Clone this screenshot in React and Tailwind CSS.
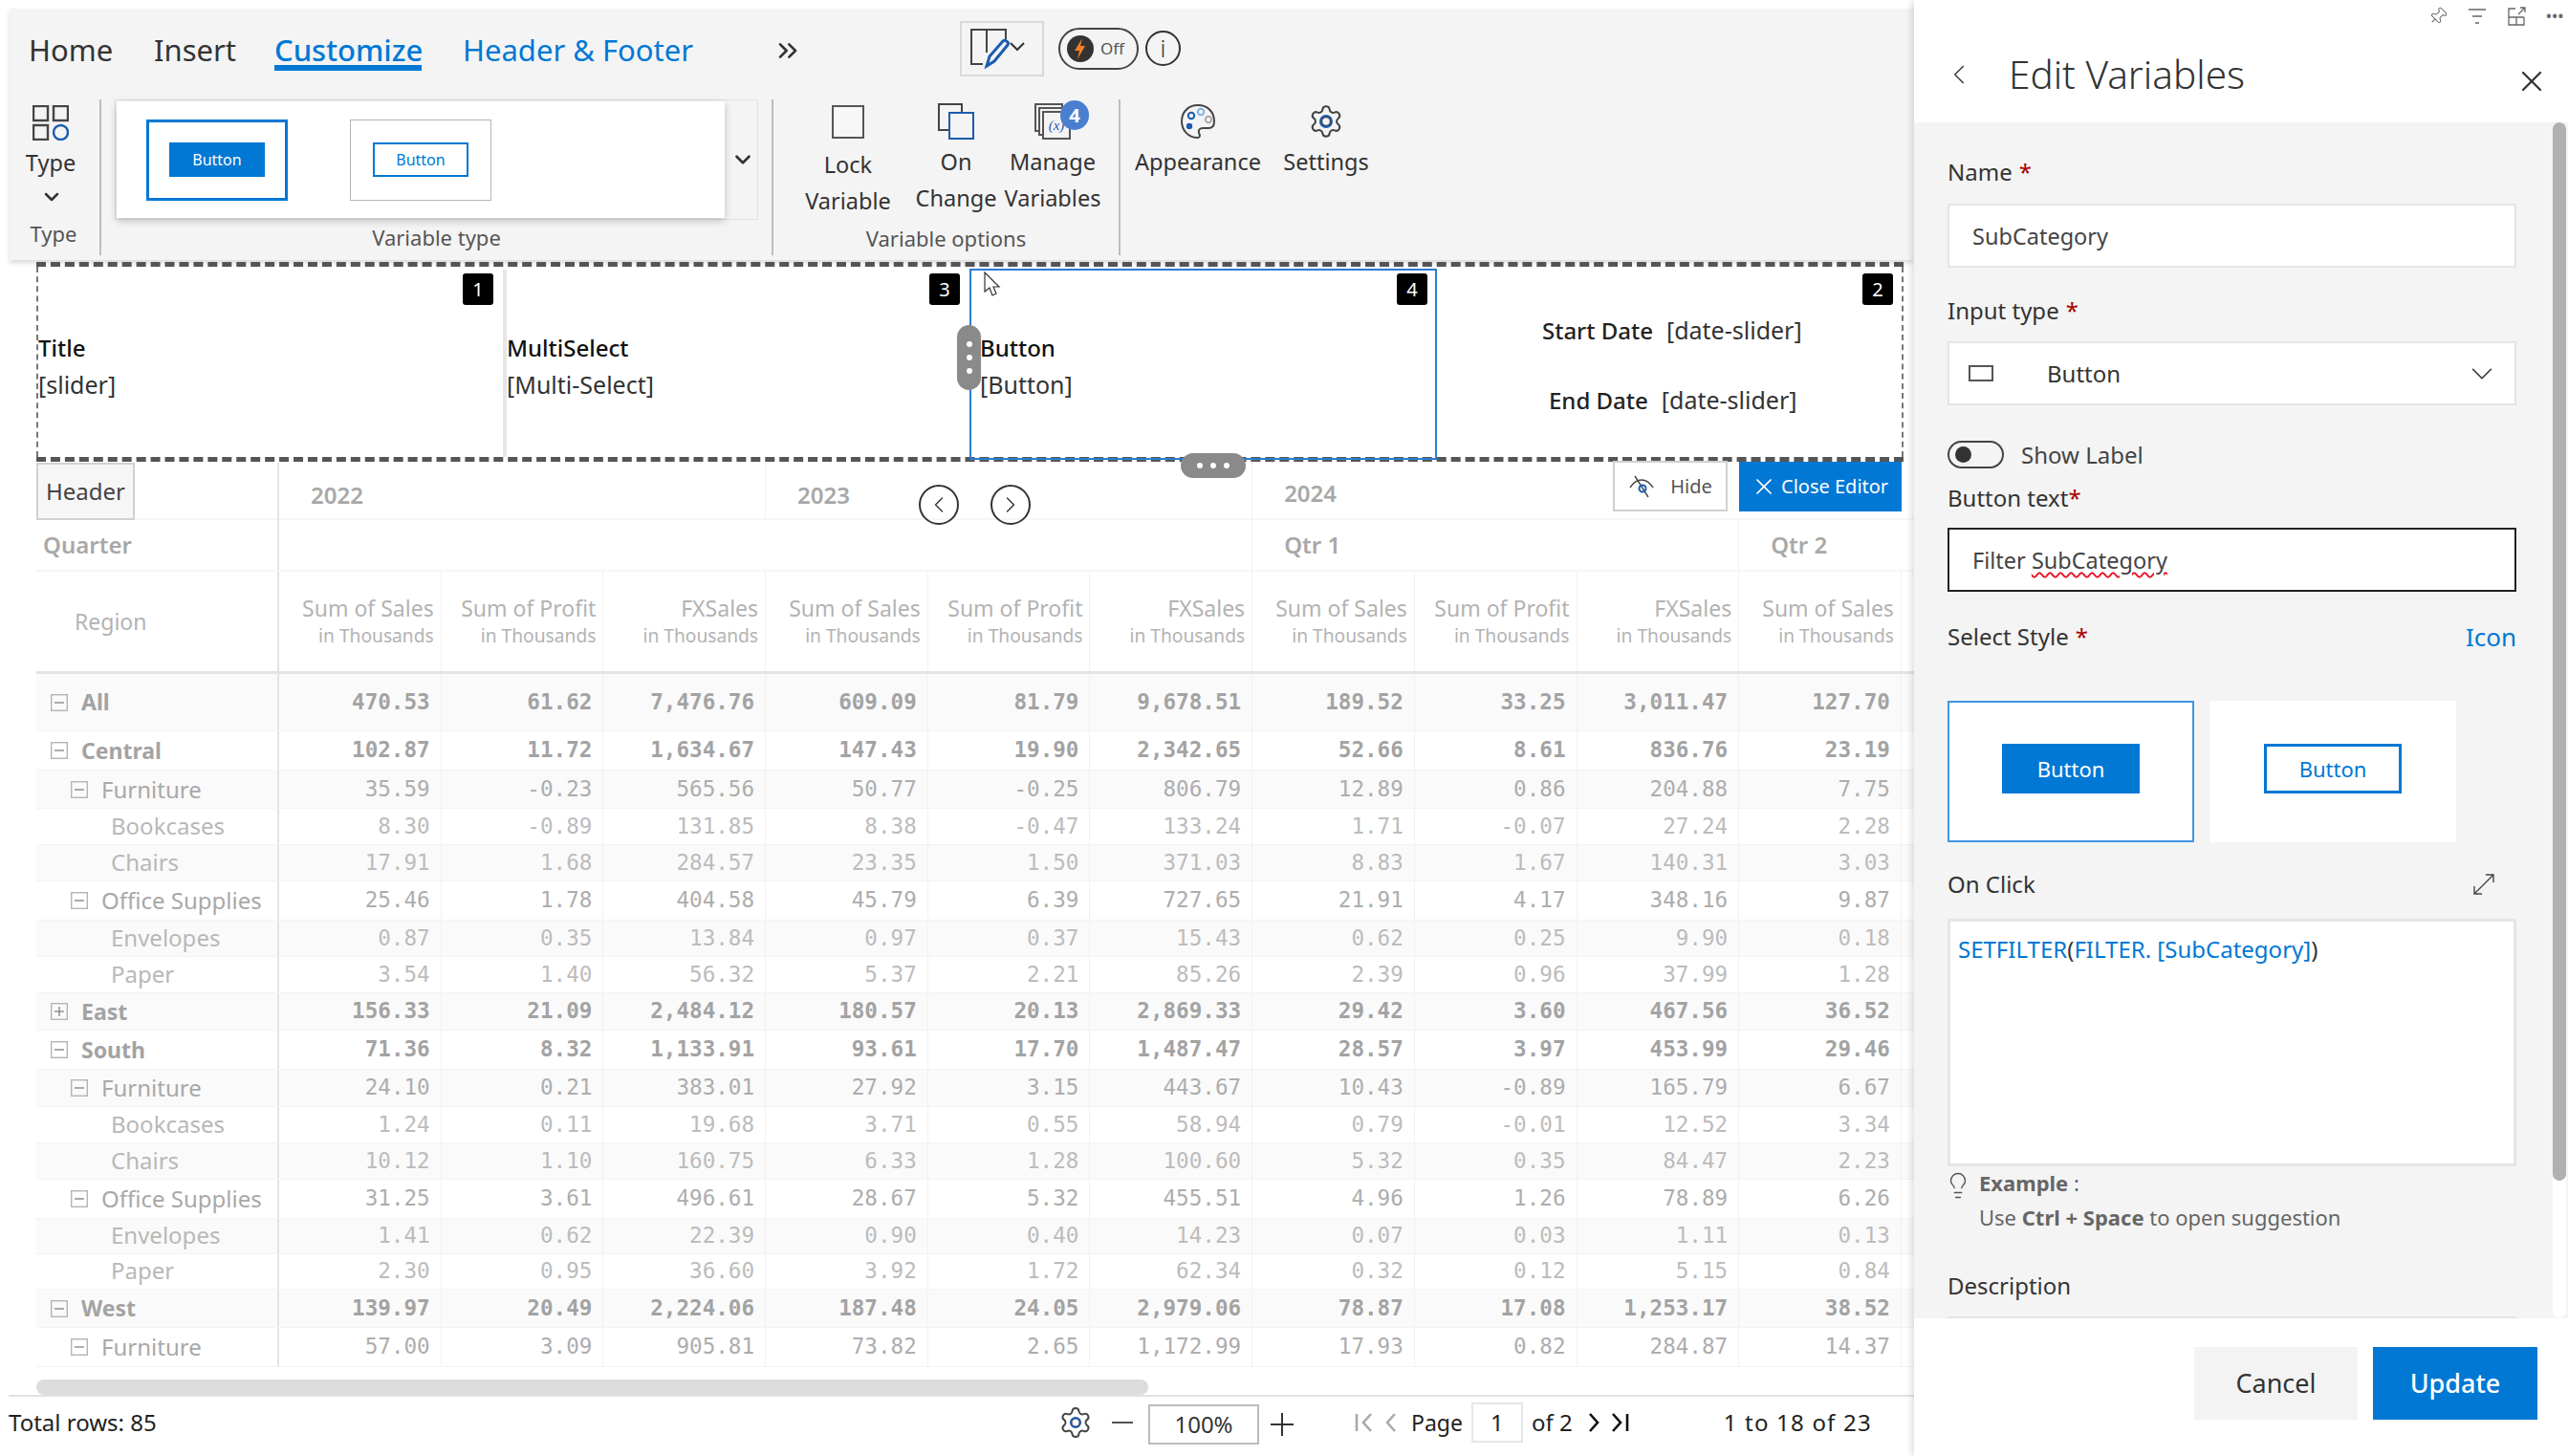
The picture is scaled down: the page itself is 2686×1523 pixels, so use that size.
import { ChevronDown, ChevronLeft, ChevronRight, ChevronsRight, Settings, X, Pin, Lightbulb } from 'lucide-react';

const rows = [
  ['All', 0, 'minus', 60, ['470.53', '61.62', '7,476.76', '609.09', '81.79', '9,678.51', '189.52', '33.25', '3,011.47', '127.70']],
  ['Central', 0, 'minus', 41, ['102.87', '11.72', '1,634.67', '147.43', '19.90', '2,342.65', '52.66', '8.61', '836.76', '23.19']],
  ['Furniture', 1, 'minus', 40, ['35.59', '-0.23', '565.56', '50.77', '-0.25', '806.79', '12.89', '0.86', '204.88', '7.75']],
  ['Bookcases', 2, null, 38, ['8.30', '-0.89', '131.85', '8.38', '-0.47', '133.24', '1.71', '-0.07', '27.24', '2.28']],
  ['Chairs', 2, null, 38, ['17.91', '1.68', '284.57', '23.35', '1.50', '371.03', '8.83', '1.67', '140.31', '3.03']],
  ['Office Supplies', 1, 'minus', 41, ['25.46', '1.78', '404.58', '45.79', '6.39', '727.65', '21.91', '4.17', '348.16', '9.87']],
  ['Envelopes', 2, null, 38, ['0.87', '0.35', '13.84', '0.97', '0.37', '15.43', '0.62', '0.25', '9.90', '0.18']],
  ['Paper', 2, null, 38, ['3.54', '1.40', '56.32', '5.37', '2.21', '85.26', '2.39', '0.96', '37.99', '1.28']],
  ['East', 0, 'plus', 39, ['156.33', '21.09', '2,484.12', '180.57', '20.13', '2,869.33', '29.42', '3.60', '467.56', '36.52']],
  ['South', 0, 'minus', 41, ['71.36', '8.32', '1,133.91', '93.61', '17.70', '1,487.47', '28.57', '3.97', '453.99', '29.46']],
  ['Furniture', 1, 'minus', 39, ['24.10', '0.21', '383.01', '27.92', '3.15', '443.67', '10.43', '-0.89', '165.79', '6.67']],
  ['Bookcases', 2, null, 38, ['1.24', '0.11', '19.68', '3.71', '0.55', '58.94', '0.79', '-0.01', '12.52', '3.34']],
  ['Chairs', 2, null, 38, ['10.12', '1.10', '160.75', '6.33', '1.28', '100.60', '5.32', '0.35', '84.47', '2.23']],
  ['Office Supplies', 1, 'minus', 41, ['31.25', '3.61', '496.61', '28.67', '5.32', '455.51', '4.96', '1.26', '78.89', '6.26']],
  ['Envelopes', 2, null, 37, ['1.41', '0.62', '22.39', '0.90', '0.40', '14.23', '0.07', '0.03', '1.11', '0.13']],
  ['Paper', 2, null, 37, ['2.30', '0.95', '36.60', '3.92', '1.72', '62.34', '0.32', '0.12', '5.15', '0.84']],
  ['West', 0, 'minus', 40, ['139.97', '20.49', '2,224.06', '187.48', '24.05', '2,979.06', '78.87', '17.08', '1,253.17', '38.52']],
  ['Furniture', 1, 'minus', 41, ['57.00', '3.09', '905.81', '73.82', '2.65', '1,172.99', '17.93', '0.82', '284.87', '14.37']],
];

const measures = ['Sum of Sales', 'Sum of Profit', 'FXSales', 'Sum of Sales', 'Sum of Profit', 'FXSales', 'Sum of Sales', 'Sum of Profit', 'FXSales', 'Sum of Sales'];

const gridCols = 'grid grid-cols-[254px_repeat(10,169.7px)]';

function TreeBox({ kind }) {
  return (
    <svg width="18" height="18" viewBox="0 0 18 18" className="shrink-0 text-[#b5b5b5]" fill="none" stroke="currentColor" strokeWidth="1.4">
      <rect x="0.7" y="0.7" width="16.6" height="16.6" />
      <path d="M4 9h10" stroke="#888" />
      {kind === 'plus' && <path d="M9 4v10" stroke="#888" />}
    </svg>
  );
}

function TableRow({ row, index }) {
  const [label, level, box, height, values] = row;
  const bold = level === 0;
  const indent = level === 0 ? 'pl-[15px]' : level === 1 ? 'pl-[36px]' : 'pl-[78px] pb-[2px]';
  const tone = index % 2 === 0 ? 'bg-[#fafafa]' : 'bg-white';
  return (
    <div className={`${gridCols} ${tone} border-b border-[#f3f3f3]`} style={{ height }}>
      <div className={`${indent} flex items-center gap-[14px] border-r-2 border-[#e4e4e4] ${bold ? 'text-[23px] font-bold text-[#a3a3a3]' : level === 1 ? 'text-[24px] text-[#a8a8a8]' : 'text-[24px] text-[#b8b8b8]'}`}>
        {box && <TreeBox kind={box} />}
        <span className="leading-none">{label}</span>
      </div>
      {values.map((v, i) => (
        <div key={i} className={`flex items-center justify-end pr-[11px] border-r border-[#f1f1f1] font-['DejaVu_Sans_Mono',monospace] text-[22.6px] ${bold ? 'font-bold text-[#a3a3a3]' : level === 1 ? 'text-[#adadad]' : 'text-[#bcbcbc]'}`}>
          {v}
        </div>
      ))}
    </div>
  );
}

function RibbonItem({ icon, lines, width, topPad = 'pt-[5px]' }) {
  return (
    <div className={`flex flex-col items-center ${topPad}`} style={{ width }}>
      <div className="h-[46px] flex items-center justify-center">{icon}</div>
      <div className="text-[23.5px] leading-[38px] text-[#333] text-center whitespace-nowrap">
        {lines.map((l) => <div key={l}>{l}</div>)}
      </div>
    </div>
  );
}

function Thumb({ active }) {
  return (
    <div className={`w-[148px] h-[85px] flex items-center justify-center bg-white ${active ? 'border-[3px] border-[#0078d4]' : 'border border-[#b5b5b5]'}`}>
      <div className={`w-[100px] h-[36px] flex items-center justify-center text-[16px] ${active ? 'bg-[#0078d4] text-white' : 'border-2 border-[#0078d4] text-[#0078d4]'}`}>Button</div>
    </div>
  );
}

function Ribbon() {
  return (
    <div className="relative ml-[10px] mt-[9px] h-[263px] bg-[#f4f4f4] shadow-[0_3px_5px_rgba(0,0,0,0.15)]">
      <div className="flex items-center h-[95px] pb-[8px] text-[31px] pl-[20px]">
        <span className="text-[#333] w-[131px] leading-none">Home</span>
        <span className="text-[#333] w-[126px] leading-none">Insert</span>
        <span className="relative text-[#0078d4] font-medium w-[197px] leading-none">
          Customize
          <span className="absolute left-0 top-[31px] w-[154px] h-[6px] bg-[#0078d4]" />
        </span>
        <span className="text-[#0078d4] w-[324px] leading-none">Header &amp; Footer</span>
        <ChevronsRight size={32} strokeWidth={2} className="text-[#333]" />
        <div className="ml-[164px] mb-[4px] w-[88px] h-[58px] border-2 border-[#d9d9d9] flex items-center justify-center">
          <svg width="68" height="44" viewBox="0 0 68 44" fill="none">
            <path d="M14 38H2V2h36v10M18 2v24" stroke="#444" strokeWidth="2" />
            <path d="M18 40l3-10 14-16c2-2 7 1 5 4L26 35z" stroke="#1c5cb0" strokeWidth="3" />
            <path d="M43 16l7 7 7-7" stroke="#333" strokeWidth="2" />
          </svg>
        </div>
        <div className="ml-[15px] mb-[4px] w-[84px] h-[44px] rounded-full border-2 border-[#444] flex items-center pl-[7px] gap-[7px]">
          <svg width="28" height="28" viewBox="0 0 28 28">
            <circle cx="14" cy="14" r="14" fill="#333" />
            <path d="M16 3l-8 13h5l-2 9 8-14h-5z" fill="#f58025" />
          </svg>
          <span className="text-[17px] text-[#555] leading-none">Off</span>
        </div>
        <div className="ml-[7px] mb-[4px] w-[37px] h-[37px] rounded-full border-2 border-[#333] flex items-center justify-center text-[25px] text-[#333] leading-none font-light">i</div>
      </div>

      <div className="flex h-[168px]">
        <div className="w-[94px] shrink-0 flex flex-col items-center pr-[8px]">
          <svg width="38" height="37" viewBox="0 0 38 37" className="mt-[6px]" fill="none" strokeWidth="2.4">
            <rect x="1" y="1" width="15" height="15" stroke="#444" />
            <rect x="22" y="1" width="15" height="15" stroke="#444" />
            <rect x="1" y="21" width="15" height="15" stroke="#444" />
            <circle cx="29.5" cy="28.5" r="7.5" stroke="#1c5cb0" />
          </svg>
          <span className="text-[23.5px] leading-[30px] text-[#333] mt-[8px]">Type</span>
          <ChevronDown size={24} strokeWidth={2.5} className="text-[#333] mt-[9px] ml-[2px]" />
          <span className="text-[22px] leading-[28px] text-[#555] mt-[12px] ml-[6px]">Type</span>
        </div>
        <div className="w-[2px] h-[163px] bg-[#bdbdbd] shrink-0" />
        <div className="w-[701px] shrink-0 flex flex-col pl-[14px]">
          <div className="flex items-center w-[673px] h-[126px] border border-[#e2e2e2]">
            <div className="w-[636px] h-[122px] ml-[1px] bg-white shadow-[0_3px_8px_rgba(0,0,0,0.22)] flex items-center gap-[65px] pl-[31px]">
              <Thumb active />
              <Thumb />
            </div>
            <ChevronDown size={26} strokeWidth={2.5} className="text-[#333] ml-[6px]" />
          </div>
          <div className="w-[673px] text-center text-[22px] leading-[28px] text-[#555] mt-[4px]">Variable type</div>
        </div>
        <div className="w-[2px] h-[163px] bg-[#bdbdbd] shrink-0" />
        <div className="w-[361px] shrink-0 flex flex-col relative">
          <div className="flex h-[133px] pl-[26px]">
            <RibbonItem
              width={104}
              icon={<div className="w-[34px] h-[35px] mb-[6px] border-2 border-[#555] bg-[#f7f7f7]" />}
              lines={['Lock', 'Variable']}
              topPad="pt-[3px]"
            />
            <RibbonItem
              width={122}
              icon={
                <div className="relative w-[38px] h-[38px]">
                  <div className="absolute left-0 top-0 w-[26px] h-[29px] border-2 border-[#444]" />
                  <div className="absolute left-[11px] top-[9px] w-[27px] h-[29px] border-2 border-[#1c5cb0] bg-[#f4f4f4]" />
                </div>
              }
              lines={['On', 'Change']}
              topPad="pt-[0px]"
            />
            <RibbonItem
              width={80}
              icon={
                <div className="relative w-[38px] h-[38px]">
                  <div className="absolute left-0 top-0 w-[30px] h-[30px] border-2 border-[#555]" />
                  <div className="absolute left-[4px] top-[4px] w-[30px] h-[30px] border-2 border-[#555] bg-[#f4f4f4]" />
                  <div className="absolute left-[8px] top-[8px] w-[30px] h-[30px] border-2 border-[#555] bg-[#f4f4f4] flex items-center justify-center text-[15px] italic text-[#1c5cb0] font-['Liberation_Serif',serif] leading-none">(x)</div>
                  <div className="absolute left-[27px] top-[-3px] w-[30px] h-[31px] rounded-full bg-[#4a7fd0] flex items-center justify-center text-white text-[20px] font-bold leading-none">4</div>
                </div>
              }
              lines={['Manage', 'Variables']}
              topPad="pt-[0px]"
            />
          </div>
          <div className="text-center text-[22px] leading-[28px] text-[#555] mt-[-2px]">Variable options</div>
        </div>
        <div className="w-[2px] h-[163px] bg-[#bdbdbd] shrink-0" />
        <div className="flex">
          <RibbonItem
            width={162}
            topPad="pt-[0px]"
            icon={
              <svg width="38" height="38" viewBox="0 0 38 38" fill="none">
                <path d="M19 2C9 2 2 9 2 19c0 9 7 17 16 17 4 0 3-3 2-5-1-3 1-5 4-5h6c4 0 6-3 6-7C36 9 29 2 19 2z" stroke="#444" strokeWidth="2" />
                <circle cx="12" cy="13" r="3.2" stroke="#1c5cb0" strokeWidth="2" />
                <circle cx="22" cy="9" r="3.2" stroke="#7fb2e5" strokeWidth="2" />
                <circle cx="30" cy="17" r="3.2" stroke="#aaa" strokeWidth="2" />
                <circle cx="10" cy="24" r="3.2" fill="#1c5cb0" />
              </svg>
            }
            lines={['Appearance']}
          />
          <RibbonItem
            width={106}
            topPad="pt-[0px]"
            icon={
              <div className="relative">
                <Settings size={38} strokeWidth={1.3} className="text-[#444]" />
                <span className="absolute left-[12px] top-[12px] w-[14px] h-[14px] rounded-full border-2 border-[#1c5cb0]" />
              </div>
            }
            lines={['Settings']}
          />
        </div>
      </div>
    </div>
  );
}

function FilterCell({ width, badge, selected, children, divider }) {
  return (
    <div className={`relative h-full shrink-0 flex ${divider ? 'border-r-4 border-[#e6e6e6]' : ''}`} style={{ width }}>
      {selected && <div className="absolute left-0 top-[-1px] right-0 bottom-[-3px] border-2 border-[#2b7cd3]" />}
      {children}
      <div className="absolute right-[10px] top-[4px] w-[32px] h-[33px] rounded-[3px] bg-black text-white text-[20px] flex items-center justify-center leading-none">{badge}</div>
    </div>
  );
}

function Stacked({ title, tag, pad }) {
  return (
    <div className={`${pad} pt-[63px] text-[24px] leading-[38px] text-[#222]`}>
      <div className="font-medium text-[#111]">{title}</div>
      <div className="text-[25px] text-[#333]">{tag}</div>
    </div>
  );
}

function FilterBar() {
  return (
    <div className="relative ml-[38px] mt-[2px] w-[1953px] h-[209px] border-y-[5px] border-dashed border-[#555]">
      <div className="absolute left-0 top-0 bottom-0 border-l-2 border-dashed border-[#777]" />
      <div className="absolute right-0 top-0 bottom-0 border-l-2 border-dashed border-[#777]" />
      <div className="flex h-full pt-[3px]">
        <FilterCell width={492} badge="1" divider>
          <Stacked title="Title" tag="[slider]" pad="pl-[2px]" />
        </FilterCell>
        <FilterCell width={484} badge="3">
          <Stacked title="MultiSelect" tag="[Multi-Select]" pad="pl-0" />
        </FilterCell>
        <FilterCell width={489} badge="4" selected>
          <Stacked title="Button" tag="[Button]" pad="pl-[11px]" />
        </FilterCell>
        <FilterCell width={487} badge="2">
          <div className="w-full pt-[44px] text-[24px] text-[#333] leading-[38px]">
            <div className="pl-[110px]"><span className="font-medium text-[#222]">Start Date</span><span className="ml-[14px] text-[25px]">[date-slider]</span></div>
            <div className="pl-[117px] mt-[34px]"><span className="font-medium text-[#222]">End Date</span><span className="ml-[14px] text-[25px]">[date-slider]</span></div>
          </div>
        </FilterCell>
      </div>
    </div>
  );
}

function PivotTable() {
  return (
    <div className="ml-[38px] mt-[1px] w-[1964px] overflow-hidden">
      <div className={`${gridCols} h-[60px] border-b-2 border-[#f6f6f6]`}>
        <div className="border-r-2 border-[#e4e4e4]">
          <div className="w-[103px] h-[60px] border-2 border-[#d0d0d0] bg-[#f6f6f6] text-[#444] text-[24px] flex items-center justify-center">Header</div>
        </div>
        <div className="col-span-3 border-r border-[#f1f1f1] pl-[33px] pt-[16px] text-[24px] font-semibold text-[#a8a8a8]">2022</div>
        <div className="col-span-3 border-r border-[#f1f1f1] pl-[33px] pt-[16px] text-[24px] font-semibold text-[#a8a8a8]">2023</div>
        <div className="col-span-4 pl-[33px] pt-[14px] text-[24px] font-semibold text-[#a8a8a8]">2024</div>
      </div>
      <div className={`${gridCols} h-[54px] border-b-2 border-[#f6f6f6]`}>
        <div className="border-r-2 border-[#e4e4e4] pl-[7px] flex items-center text-[24px] font-semibold text-[#a8a8a8]">Quarter</div>
        <div className="col-span-6 border-r border-[#f1f1f1]" />
        <div className="col-span-3 border-r border-[#f1f1f1] pl-[33px] flex items-center text-[24px] font-semibold text-[#a8a8a8]">Qtr 1</div>
        <div className="pl-[33px] flex items-center text-[24px] font-semibold text-[#a8a8a8]">Qtr 2</div>
      </div>
      <div className={`${gridCols} h-[107px] border-b-[3px] border-[#e4e4e4]`}>
        <div className="border-r-2 border-[#e4e4e4] pl-[40px] flex items-center text-[23px] text-[#b3b3b3]">Region</div>
        {measures.map((m, i) => (
          <div key={i} className="border-r border-[#f1f1f1] flex flex-col items-end justify-center pr-[7px] text-[#b3b3b3]">
            <span className="text-[23px] leading-[30px] whitespace-nowrap">{m}</span>
            <span className="text-[19.2px] leading-[28px] whitespace-nowrap">in Thousands</span>
          </div>
        ))}
      </div>
      {rows.map((r, i) => <TableRow key={i} row={r} index={i} />)}
    </div>
  );
}

function PagerIcon({ d, dark }) {
  return (
    <svg width="26" height="26" viewBox="0 0 26 26" fill="none" stroke={dark ? '#111' : '#aaa'} strokeWidth="2.6">
      <path d={d} />
    </svg>
  );
}

function Footer() {
  return (
    <div className="ml-[9px] flex items-center h-[56px] border-t-2 border-[#e2e2e2] text-[24px] text-[#222]">
      <span className="w-[1098px]">Total rows: 85</span>
      <div className="relative">
        <Settings size={36} strokeWidth={1.3} className="text-[#444]" />
        <span className="absolute left-[12px] top-[12px] w-[12px] h-[12px] rounded-full border-2 border-[#1c5cb0]" />
      </div>
      <span className="ml-[20px] w-[22px] h-[2px] bg-[#555]" />
      <div className="ml-[16px] mt-[4px] w-[116px] h-[42px] border-2 border-[#bbb] flex items-center justify-center text-[#333] text-[24px]">100%</div>
      <span className="relative ml-[12px] w-[24px] h-[24px] mt-[4px]">
        <span className="absolute left-0 top-[11px] w-[24px] h-[2px] bg-[#333]" />
        <span className="absolute left-[11px] top-0 w-[2px] h-[24px] bg-[#333]" />
      </span>
      <div className="ml-[62px] flex items-center">
        <PagerIcon d="M4 4v18M19 4l-8 9 8 9" />
        <PagerIcon d="M18 4l-8 9 8 9" />
      </div>
      <span className="ml-[9px] text-[23px]">Page</span>
      <div className="ml-[9px] w-[54px] h-[42px] border-2 border-[#e6e6e6] flex items-center justify-center">1</div>
      <span className="ml-[9px]">of 2</span>
      <div className="ml-[10px] flex items-center">
        <PagerIcon d="M8 4l8 9-8 9" dark />
        <PagerIcon d="M6 4l8 9-8 9M21 4v18" dark />
      </div>
      <span className="ml-[96px] tracking-[1.2px]">1 to 18 of 23</span>
    </div>
  );
}

function Label({ children, required, className = '' }) {
  return (
    <div className={`text-[24px] leading-[32px] text-[#333] ${className}`}>
      {children}
      {required && <span className="text-[#a80000] ml-[7px]">*</span>}
    </div>
  );
}

function StyleCard({ active }) {
  return (
    <div className={`w-[258px] h-[148px] bg-white flex items-center justify-center pb-[6px] ${active ? 'border-2 border-[#3f96e3]' : ''}`}>
      <div className={`w-[144px] h-[52px] flex items-center justify-center text-[22px] ${active ? 'bg-[#0078d4] text-white' : 'border-[3px] border-[#0078d4] text-[#0078d4]'}`}>Button</div>
    </div>
  );
}

function SidePanel() {
  return (
    <div className="relative w-[684px] h-[1523px] flex flex-col bg-white shrink-0 shadow-[-3px_0_6px_rgba(0,0,0,0.12)]">
      <div className="h-[128px] shrink-0 relative">
        <div className="absolute top-[6px] right-0 w-[146px] flex items-center justify-between pr-[4px] text-[#666]">
          <Pin size={20} strokeWidth={1.2} className="rotate-45" />
          <svg width="20" height="20" viewBox="0 0 20 20" stroke="currentColor" strokeWidth="1.3"><path d="M1 3h18M5 10h10M8 17h4" /></svg>
          <svg width="20" height="22" viewBox="0 0 20 22" fill="none" stroke="currentColor" strokeWidth="1.3"><path d="M9 3H2v17h16V12M10 12h8M10 12v8M2 12h8M12 9l7-7M14 2h5v5" /></svg>
          <span className="text-[14px] font-bold leading-none tracking-[1px]">•••</span>
        </div>
        <div className="flex items-center pl-[30px] pt-[53px]">
          <ChevronLeft size={34} strokeWidth={1.2} className="text-[#444]" />
          <span className="ml-[35px] text-[40.5px] leading-[50px] font-light text-[#333]">Edit Variables</span>
        </div>
        <X size={36} strokeWidth={1.5} className="absolute left-[628px] top-[67px] text-[#333]" />
      </div>

      <div className="h-[1251px] shrink-0 bg-[#f4f4f4] relative overflow-hidden pl-[35px]">
        <div className="absolute right-[2px] top-0 w-[14px] h-[1250px] bg-white rounded-full">
          <div className="w-[14px] h-[1107px] bg-[#b0b0b0] rounded-b-full rounded-t-full" />
        </div>
        <div className="w-[595px]">
          <Label required className="mt-[36px]">Name</Label>
          <div className="mt-[17px] h-[67px] border-2 border-[#e5e5e5] bg-white flex items-center pl-[24px] pt-[2px] text-[23.5px] text-[#444]">SubCategory</div>
          <Label required className="mt-[29px]">Input type</Label>
          <div className="mt-[16px] h-[67px] border-2 border-[#e5e5e5] bg-white flex items-center text-[24px] text-[#333]">
            <div className="ml-[20px] w-[26px] h-[17px] border-2 border-[#555]" />
            <span className="ml-[56px]">Button</span>
            <ChevronDown size={38} strokeWidth={1} className="ml-auto mr-[15px] text-[#333]" />
          </div>
          <div className="mt-[37px] flex items-center h-[29px]">
            <div className="w-[59px] h-[29px] rounded-full border-2 border-[#444] flex items-center pl-[6px]">
              <div className="w-[17px] h-[17px] rounded-full bg-[#333]" />
            </div>
            <span className="ml-[18px] text-[24px] text-[#444]">Show Label</span>
          </div>
          <div className="mt-[15px] text-[24px] leading-[32px] text-[#333]">Button text<span className="text-[#a80000]">*</span></div>
          <div className="mt-[15px] h-[67px] border-2 border-[#222] bg-white flex items-center pl-[24px] pt-[2px] text-[23.5px] text-[#444]">
            Filter&nbsp;<span className="underline decoration-wavy decoration-[#e81123] decoration-[1.5px] underline-offset-[3px]">SubCategory</span>
          </div>
          <div className="mt-[31px] flex items-center justify-between">
            <Label required>Select Style</Label>
            <span className="text-[26px] leading-[32px] text-[#0078d4]">Icon</span>
          </div>
          <div className="mt-[51px] flex gap-[16px]">
            <StyleCard active />
            <StyleCard />
          </div>
          <div className="mt-[28px] flex items-center justify-between pr-[22px]">
            <Label>On Click</Label>
            <svg width="24" height="24" viewBox="0 0 24 24" fill="none" stroke="#444" strokeWidth="1.4"><path d="M2 22L22 2M14 2h8v8M2 14v8h8" /></svg>
          </div>
          <div className="mt-[20px] h-[259px] border-[3px] border-[#e5e5e5] bg-white pl-[8px] pt-[13px] text-[24px] leading-[32px] text-[#333]">
            <span className="text-[#0078d4]">SETFILTER</span>(<span className="text-[#0078d4]">FILTER.&nbsp;[SubCategory]</span>)
          </div>
          <div className="mt-[-1px] flex text-[#666]">
            <Lightbulb size={30} strokeWidth={1.1} className="shrink-0 text-[#555] mt-[6px] -ml-[4px]" />
            <div className="ml-[7px] text-[22px] leading-[36px]">
              <div className="font-bold">Example <span className="font-normal">:</span></div>
              <div>Use <b>Ctrl + Space</b> to open suggestion</div>
            </div>
          </div>
          <Label className="mt-[38px]">Description</Label>
          <div className="mt-[16px] h-[60px] border-2 border-[#e5e5e5] bg-white" />
        </div>
      </div>

      <div className="flex justify-end gap-[16px] pr-[32px] pt-[30px]">
        <div className="w-[171px] h-[76px] bg-[#f3f3f3] flex items-center justify-center text-[27px] text-[#333]">Cancel</div>
        <div className="w-[172px] h-[76px] bg-[#0078d4] flex items-center justify-center text-[27px] font-medium text-white">Update</div>
      </div>
    </div>
  );
}

export default function App() {
  return (
    <div className="relative flex w-[2686px] h-[1523px] overflow-hidden bg-white font-['Noto_Sans',sans-serif]">
      <div className="relative w-[2002px] shrink-0 flex flex-col">
        <Ribbon />
        <FilterBar />
        <PivotTable />
        <div className="ml-[38px] mt-[13px] w-[1163px] h-[16px] rounded-full bg-[#dcdcdc]" />
        <Footer />

        {/* floating handles and buttons over the filter bar and table */}
        <div className="absolute left-[1001px] top-[340px] w-[25px] h-[68px] rounded-full bg-[#8a8a8a] flex flex-col items-center justify-center gap-[8px]">
          <span className="w-[6px] h-[6px] rounded-full bg-white" />
          <span className="w-[6px] h-[6px] rounded-full bg-white" />
          <span className="w-[6px] h-[6px] rounded-full bg-white" />
        </div>
        <div className="absolute left-[1235px] top-[474px] w-[68px] h-[26px] rounded-full bg-[#8a8a8a] flex items-center justify-center gap-[8px]">
          <span className="w-[6px] h-[6px] rounded-full bg-white" />
          <span className="w-[6px] h-[6px] rounded-full bg-white" />
          <span className="w-[6px] h-[6px] rounded-full bg-white" />
        </div>
        <div className="absolute left-[1687px] top-[482px] w-[120px] h-[53px] bg-white border-2 border-[#d0d0d0] flex items-center justify-center gap-[16px] text-[20px] text-[#555]">
          <svg width="28" height="26" viewBox="0 0 28 26" fill="none" stroke="#444" strokeWidth="1.4">
            <path d="M2 14C6 8 10 6 14 6s8 2 12 8M7 2l14 22" />
            <circle cx="15" cy="15" r="3.5" stroke="#1c5cb0" strokeWidth="2" />
          </svg>
          Hide
        </div>
        <div className="absolute left-[1819px] top-[483px] w-[170px] h-[52px] bg-[#0078d4] flex items-center justify-start pl-[12px] gap-[4px] text-[20px] text-white">
          <X size={28} strokeWidth={1.5} />
          Close Editor
        </div>
        <div className="absolute left-[961px] top-[507px] w-[42px] h-[42px] rounded-full border-2 border-[#333] flex items-center justify-center">
          <ChevronLeft size={28} strokeWidth={1.2} className="text-[#333]" />
        </div>
        <div className="absolute left-[1036px] top-[507px] w-[42px] h-[42px] rounded-full border-2 border-[#333] flex items-center justify-center">
          <ChevronRight size={28} strokeWidth={1.2} className="text-[#333]" />
        </div>
        <svg className="absolute left-[1028px] top-[283px]" width="20" height="28" viewBox="0 0 20 28" fill="white" stroke="#333" strokeWidth="1.2">
          <path d="M2 2v20l5-4 3 8 4-2-3-7h6z" />
        </svg>
      </div>
      <SidePanel />
    </div>
  );
}
